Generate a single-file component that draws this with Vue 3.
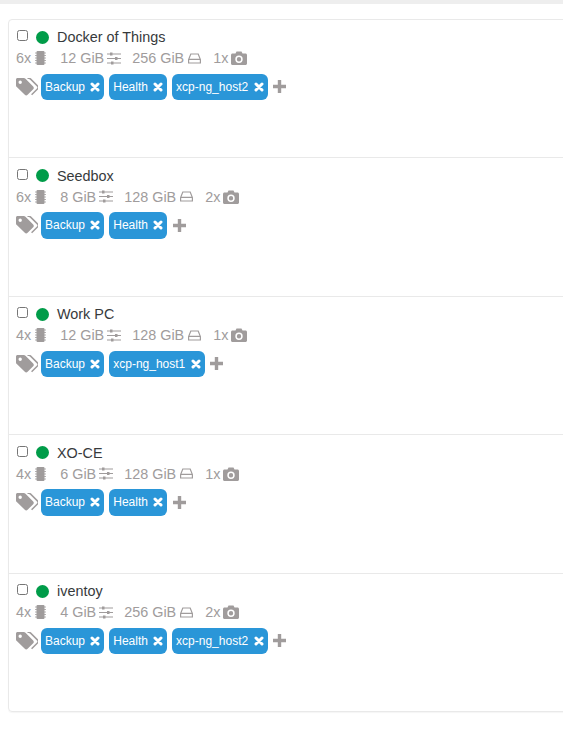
<script setup>
const vms = [
  { name: 'Docker of Things', cpu: '6x', ram: '12 GiB', disk: '256 GiB', snaps: '1x', tags: ['Backup', 'Health', 'xcp-ng_host2'] },
  { name: 'Seedbox', cpu: '6x', ram: '8 GiB', disk: '128 GiB', snaps: '2x', tags: ['Backup', 'Health'] },
  { name: 'Work PC', cpu: '4x', ram: '12 GiB', disk: '128 GiB', snaps: '1x', tags: ['Backup', 'xcp-ng_host1'] },
  { name: 'XO-CE', cpu: '4x', ram: '6 GiB', disk: '128 GiB', snaps: '1x', tags: ['Backup', 'Health'] },
  { name: 'iventoy', cpu: '4x', ram: '4 GiB', disk: '256 GiB', snaps: '2x', tags: ['Backup', 'Health', 'xcp-ng_host2'] },
]
</script>

<template>
  <div class="page">
    <div class="topbar"></div>
    <div class="card">
      <div v-for="vm in vms" :key="vm.name" class="row">
        <div class="head">
          <input type="checkbox" class="check" />
          <span class="dot"></span>
          <span class="name">{{ vm.name }}</span>
        </div>
        <div class="stats">
          <span>{{ vm.cpu }}</span>
          <svg class="ic chip" viewBox="0 0 11 14"><rect x="1.500" y="0" width="8" height="14" rx="1" fill="#a09c9c"/><path d="M0 2h11M0 4.500h11M0 7h11M0 9.500h11M0 12h11" stroke="#a09c9c" stroke-width="0.800"/></svg>
          <span class="ram">{{ vm.ram }}</span>
          <svg class="ic sliders" viewBox="0 0 14 13"><path d="M0 2h14M0 6.500h14M0 11h14" stroke="#a09c9c" stroke-width="1.200"/><rect x="3" y="0.500" width="2.500" height="3" fill="#a09c9c"/><rect x="8" y="5" width="2.500" height="3" fill="#a09c9c"/><rect x="4" y="9.500" width="2.500" height="3" fill="#a09c9c"/></svg>
          <span class="disk">{{ vm.disk }}</span>
          <svg class="ic hdd" viewBox="0 0 13 11"><path d="M2.800 1h7.400l2.200 5.500V10H.6V6.500z M.8 6.300h11.400" fill="none" stroke="#a09c9c" stroke-width="1.200"/></svg>
          <span class="snaps">{{ vm.snaps }}</span>
          <svg class="ic cam" viewBox="0 0 16 14"><path fill-rule="evenodd" d="M1.500 2.500H4.500L5.500 .5h5l1 2h3c.8 0 1.500.7 1.500 1.500v8.500c0 .8-.7 1.500-1.500 1.500H1.500C.7 14 0 13.300 0 12.500V4c0-.8.700-1.500 1.500-1.500zM8 4.500a3.700 3.700 0 1 0 0 7.400 3.700 3.700 0 0 0 0-7.400zM8 6a2.200 2.200 0 1 1 0 4.400A2.200 2.200 0 0 1 8 6z" fill="#a09c9c"/></svg>
        </div>
        <div class="tags">
          <svg class="ic tagicon" viewBox="0 0 22 18"><path fill-rule="evenodd" d="M1.500 0h6.300c.6 0 1.200.3 1.700.7l7.700 7.700c.8.800.8 2 0 2.800l-5.600 5.600c-.8.8-2 .8-2.800 0L.8 9.100C.3 8.700 0 8 0 7.400V1.500C0 .7.700 0 1.500 0zM4.200 2.600a1.700 1.700 0 1 0 0 3.400 1.700 1.700 0 0 0 0-3.400z" fill="#a09c9c"/><path d="M11.500 0.200h1.200c.6 0 1.200.3 1.700.7l7 7c.8.800.8 2.300 0 3.100l-5.800 5.800" fill="none" stroke="#a09c9c" stroke-width="1.500"/></svg>
          <span v-for="tag in vm.tags" :key="tag" class="tag">
            {{ tag }}
            <svg class="x" viewBox="0 0 10 10"><path d="M2 2l6 6M8 2L2 8" stroke="#fff" stroke-width="3" stroke-linecap="round"/></svg>
          </span>
          <svg class="plus" viewBox="0 0 13 13"><path d="M6.500 0.500v12M0.500 6.500h12" stroke="#a09c9c" stroke-width="3.400" stroke-linecap="round"/></svg>
        </div>
      </div>
    </div>
  </div>
</template>

<style>
html, body { margin: 0; background: #fff; }
</style>

<style scoped>
.page {
  height: 739px;
  overflow: hidden;
  font-family: "Liberation Sans", Arial, sans-serif;
  font-size: 14px;
  color: #373a3c;
}
.topbar { height: 4px; background: #eee; }
.card {
  margin: 14.800px -40px 0 8px;
  border: 1px solid #e9e9e9;
  border-radius: 4px;
  box-shadow: 0 1px 1px rgba(0, 0, 0, 0.04);
}
.row {
  height: 137.500px;
  box-sizing: content-box;
  border-top: 1px solid #e9e9e9;
  padding-left: 7px;
}
.row:first-child { border-top: 0; }
.head {
  display: flex;
  align-items: center;
  height: 19px;
  padding-top: 8px;
}
.check {
  width: 11px;
  height: 11px;
  margin: 0 0 3px 1px;
}
.dot {
  width: 13px;
  height: 13px;
  border-radius: 50%;
  background: #009c49;
  margin-left: 8px;
}
.name {
  margin-left: 8px;
  font-size: 14.400px;
}
.stats {
  display: flex;
  align-items: center;
  height: 22px;
  margin-top: 0.400px;
  color: #a09c9c;
  font-size: 14.400px;
}
.ic { flex: none; display: block; }
.chip { width: 11px; height: 14px; margin-left: 4px; }
.ram { margin-left: 14px; }
.sliders { width: 14px; height: 13px; margin-left: 3px; }
.disk { margin-left: 11px; }
.hdd { width: 13px; height: 11px; margin-left: 4px; }
.snaps { margin-left: 12px; }
.cam { width: 16px; height: 14px; margin-left: 3px; }
.tags {
  display: flex;
  align-items: center;
  margin-top: 4.600px;
  height: 26.400px;
}
.tagicon { width: 22px; height: 18px; margin: 0 3px 0 0; }
.tag {
  display: inline-flex;
  align-items: center;
  gap: 5.400px;
  height: 26.400px;
  padding: 0 4px;
  margin-right: 4.800px;
  border-radius: 6px;
  background: #2a96d8;
  color: #fff;
  font-size: 12px;
}
.x { width: 10px; height: 10px; }
.plus { width: 13px; height: 13px; margin-left: 1px; }
</style>
